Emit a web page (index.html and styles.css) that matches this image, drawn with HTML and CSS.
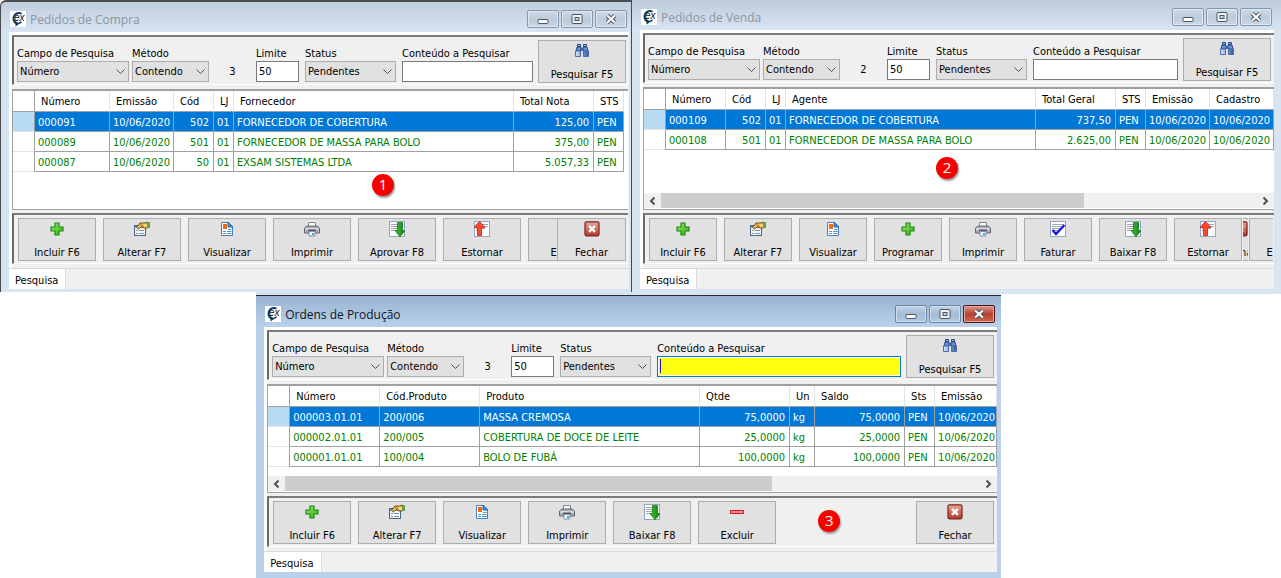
FILE: index.html
```html
<!DOCTYPE html>
<html lang="pt-BR">
<head>
<meta charset="utf-8">
<title>Pedidos e Ordens de Produção</title>
<link rel="stylesheet" href="styles.css">
</head>
<body>
<svg class="sprite" aria-hidden="true">
  <defs>
    <linearGradient id="g-green" x1="0" y1="0" x2="1" y2="1"><stop offset="0" stop-color="#9be86a"/><stop offset="1" stop-color="#2fae18"/></linearGradient>
    <linearGradient id="g-arrow" x1="0" y1="0" x2="1" y2="0"><stop offset="0" stop-color="#4cc63a"/><stop offset="1" stop-color="#0a7a0a"/></linearGradient>
    <linearGradient id="g-red" x1="0" y1="0" x2="0" y2="1"><stop offset="0" stop-color="#e9a898"/><stop offset="1" stop-color="#b0382a"/></linearGradient>
    <linearGradient id="g-blue" x1="0" y1="0" x2="1" y2="0"><stop offset="0" stop-color="#dbe8f8"/><stop offset="1" stop-color="#2c5ba6"/></linearGradient>
    <symbol id="i-app" viewBox="0 0 16 16">
      <rect width="16" height="16" fill="#fff"/>
      <path d="M11.500 2.600A5.500 5.500 0 1 0 6.500 12.600" fill="none" stroke="#123a5e" stroke-width="2"/>
      <path d="M5.500 10v5.500L9.500 12.800z" fill="#123a5e"/>
      <path d="M8.500 12.600a5.500 5.500 0 0 0 3-2" fill="none" stroke="#123a5e" stroke-width="1.500"/>
      <text x="4" y="9.500" class="logo-text">ex</text>
    </symbol>
    <symbol id="i-find" viewBox="0 0 16 16">
      <path d="M3.500 1.500h3v2h-3zM9.500 1.500h3v2h-3z" fill="#8fb0dc" stroke="#2a4a86"/>
      <path d="M3 4h4v4H2zM9 4h4l1 4H9z" fill="#6b92cc" stroke="#2a4a86"/>
      <path d="M6.500 5h3v3h-3z" fill="#3f68ac"/>
      <path d="M1.500 8h5v5.500h-5zM9.500 8h5v5.500h-5z" fill="url(#g-blue)" stroke="#4a6da8"/>
    </symbol>
    <symbol id="i-plus" viewBox="0 0 16 16"><path d="M6 2h4v4h4v4h-4v4H6v-4H2V6h4z" fill="url(#g-green)" stroke="#1c8a12" stroke-width="1.200"/></symbol>
    <symbol id="i-minus" viewBox="0 0 16 16"><rect x="1.500" y="6.500" width="13" height="3" fill="#ff8585" stroke="#e0152b"/></symbol>
    <symbol id="i-edit" viewBox="0 0 16 16">
      <rect x=".5" y="4.500" width="11" height="10" fill="#f4f7fc" stroke="#4a6284"/>
      <path d="M1 5h10v2H1z" fill="#7d99bd"/>
      <path d="M2 9.500h2M5 9.500h5M2 12.500h2M5 12.500h5" stroke="#8193ad"/>
      <path d="M2.500 6.500 6 2h5l2-1v6h-3L7.500 5.500 4.500 8z" fill="#f0c060" stroke="#6f4c16"/>
      <path d="M6 3l4 3M8 2.500l3 2.500" stroke="#a57424"/>
      <path d="M12.500 1H16v6h-3.500z" fill="#67a04b"/><path d="M9 3h4v3h-3z" fill="#ffd86b"/>
    </symbol>
    <symbol id="i-view" viewBox="0 0 16 16">
      <path d="M2.500 1.500h7l4 4v9h-11z" fill="#fff" stroke="#4f7fb8"/>
      <path d="M9 1v5h5z" fill="#3c94e4" stroke="#2065b0"/>
      <path d="M4 3h4v5H4z" fill="#f26a10"/>
      <path d="M9 8.500h3.500M4 10.500h3M8 10.500h4.500M4 12.500h3M8 12.500h4.500" stroke="#4c96dc"/>
    </symbol>
    <symbol id="i-print" viewBox="0 0 16 16">
      <path d="M4.500 1.500h7v4h-7z" fill="#fff" stroke="#7f8999"/>
      <path d="M3 5h10l2.500 2v5H.5V7z" fill="#a9adb6" stroke="#62666f"/>
      <path d="M1 7h14v2H1z" fill="#d3d6dc"/><path d="M4 8.500h8v2H4z" fill="#52565f"/>
      <path d="M5 10.500h6v4.500H5z" fill="#f5faff" stroke="#8794a8"/><path d="M8 12h2v2H8z" fill="#39a2f4"/>
    </symbol>
    <symbol id="i-sheet" viewBox="0 0 16 16">
      <rect x=".5" y=".5" width="15" height="15" fill="#fff" stroke="#93a5c0"/>
      <path d="M2 3.500h12M2 5.500h12M2 7.500h9M2 9.500h6" stroke="#a0a5ad"/>
    </symbol>
    <symbol id="i-down" viewBox="0 0 16 16">
      <use href="#i-sheet"/><path d="M8.500 1.500h5v8h2.500L11 15.800 6 9.500h2.500z" fill="url(#g-arrow)" stroke="#0b7d12" stroke-width=".8"/>
    </symbol>
    <symbol id="i-up" viewBox="0 0 16 16">
      <use href="#i-sheet"/><path d="M3.500 14.500h4v-8H11L5.500.4 0 6.500h3.500z" fill="#ff4a2c" stroke="#cf1d10" stroke-width=".8"/>
    </symbol>
    <symbol id="i-check" viewBox="0 0 16 16">
      <use href="#i-sheet"/><path d="M2.500 9 6 13 14.500 4" fill="none" stroke="#1616ee" stroke-width="2.400"/>
    </symbol>
    <symbol id="i-close" viewBox="0 0 16 16">
      <rect x="1" y=".800" width="14" height="14" rx="1.500" fill="url(#g-red)" stroke="#7c221c" stroke-width="1.200"/>
      <path d="M5 4.800l6 6M11 4.800l-6 6" stroke="#fff" stroke-width="2.400"/>
    </symbol>
    <symbol id="i-chev" viewBox="0 0 9 5"><path d="M.5.5l4 4 4-4" fill="none" stroke="#505050"/></symbol>
    <symbol id="i-left" viewBox="0 0 7 8"><path d="M5.500.5 2 4l3.500 3.500" fill="none" stroke="#505050" stroke-width="2"/></symbol>
    <symbol id="i-right" viewBox="0 0 7 8"><path d="M1.500.5 5 4 1.500 7.500" fill="none" stroke="#505050" stroke-width="2"/></symbol>
    <symbol id="c-min" viewBox="0 0 12 12"><rect x="1" y="6.500" width="10" height="4" rx="1" fill="#fff" stroke="#4b5563"/></symbol>
    <symbol id="c-max" viewBox="0 0 12 12"><rect x="1" y="1.500" width="10" height="9" rx="1" fill="#f0f4f8" stroke="#4b5563"/><rect x="4" y="4.500" width="4" height="3" fill="#c5d3e2" stroke="#4b5563"/></symbol>
    <symbol id="c-x" viewBox="0 0 12 12"><path d="M2.200 2.500l7.600 7M9.800 2.500l-7.600 7" stroke="#4b5563" stroke-width="4.400"/><path d="M2.200 2.500l7.600 7M9.800 2.500l-7.600 7" stroke="#fff" stroke-width="2.200"/></symbol>
  </defs>
</svg>

<main class="desk">
  <section class="window win-buy">
    <header class="titlebar">
      <svg class="icon"><use href="#i-app"/></svg><h2>Pedidos de Compra</h2>
      <button class="cap" aria-label="Minimizar"><svg><use href="#c-min"/></svg></button>
      <button class="cap" aria-label="Maximizar"><svg><use href="#c-max"/></svg></button>
      <button class="cap" aria-label="Fechar janela"><svg><use href="#c-x"/></svg></button>
    </header>
    <div class="client">
      <form class="panel search">
        <div class="field w-campo"><label for="a1">Campo de Pesquisa</label><span class="combo"><select id="a1"><option>Número</option></select><svg><use href="#i-chev"/></svg></span></div>
        <div class="field w-metodo"><label for="a2">Método</label><span class="combo"><select id="a2"><option>Contendo</option></select><svg><use href="#i-chev"/></svg></span></div>
        <output class="count">3</output>
        <div class="field w-limite"><label for="a3">Limite</label><input id="a3" type="text" value="50"></div>
        <div class="field w-status"><label for="a4">Status</label><span class="combo"><select id="a4"><option>Pendentes</option></select><svg><use href="#i-chev"/></svg></span></div>
        <div class="field grow"><label for="a5">Conteúdo a Pesquisar</label><input id="a5" type="text"></div>
        <button type="button" class="tool find"><svg class="icon"><use href="#i-find"/></svg>Pesquisar F5</button>
      </form>
      <div class="gridbox">
        <table>
          <thead><tr><th class="c-ind"></th><th class="c75">Número</th><th class="c64">Emissão</th><th class="c40">Cód</th><th class="c20">LJ</th><th>Fornecedor</th><th class="c80">Total Nota</th><th class="c30">STS</th></tr></thead>
          <tbody>
            <tr class="sel"><td></td><td>000091</td><td>10/06/2020</td><td class="r">502</td><td>01</td><td>FORNECEDOR DE COBERTURA</td><td class="r">125,00</td><td>PEN</td></tr>
            <tr><td></td><td>000089</td><td>10/06/2020</td><td class="r">501</td><td>01</td><td>FORNECEDOR DE MASSA PARA BOLO</td><td class="r">375,00</td><td>PEN</td></tr>
            <tr><td></td><td>000087</td><td>10/06/2020</td><td class="r">50</td><td>01</td><td>EXSAM SISTEMAS LTDA</td><td class="r">5.057,33</td><td>PEN</td></tr>
          </tbody>
        </table>
      </div>
      <div class="panel tools">
        <div class="strip">
          <button class="tool"><svg class="icon"><use href="#i-plus"/></svg>Incluir F6</button>
          <button class="tool"><svg class="icon"><use href="#i-edit"/></svg>Alterar F7</button>
          <button class="tool"><svg class="icon"><use href="#i-view"/></svg>Visualizar</button>
          <button class="tool"><svg class="icon"><use href="#i-print"/></svg>Imprimir</button>
          <button class="tool"><svg class="icon"><use href="#i-down"/></svg>Aprovar F8</button>
          <button class="tool"><svg class="icon"><use href="#i-up"/></svg>Estornar</button>
          <button class="tool"><svg class="icon"><use href="#i-minus"/></svg>Excluir</button>
        </div>
        <button class="tool narrow"><svg class="icon"><use href="#i-close"/></svg>Fechar</button>
      </div>
    </div>
    <nav class="tabs"><button class="tab">Pesquisa</button></nav>
    <span class="badge">1</span>
  </section>

  <section class="window win-sell">
    <header class="titlebar">
      <svg class="icon"><use href="#i-app"/></svg><h2>Pedidos de Venda</h2>
      <button class="cap" aria-label="Minimizar"><svg><use href="#c-min"/></svg></button>
      <button class="cap" aria-label="Maximizar"><svg><use href="#c-max"/></svg></button>
      <button class="cap" aria-label="Fechar janela"><svg><use href="#c-x"/></svg></button>
    </header>
    <div class="client">
      <form class="panel search">
        <div class="field w-campo"><label for="b1">Campo de Pesquisa</label><span class="combo"><select id="b1"><option>Número</option></select><svg><use href="#i-chev"/></svg></span></div>
        <div class="field w-metodo"><label for="b2">Método</label><span class="combo"><select id="b2"><option>Contendo</option></select><svg><use href="#i-chev"/></svg></span></div>
        <output class="count">2</output>
        <div class="field w-limite"><label for="b3">Limite</label><input id="b3" type="text" value="50"></div>
        <div class="field w-status"><label for="b4">Status</label><span class="combo"><select id="b4"><option>Pendentes</option></select><svg><use href="#i-chev"/></svg></span></div>
        <div class="field grow"><label for="b5">Conteúdo a Pesquisar</label><input id="b5" type="text"></div>
        <button type="button" class="tool find"><svg class="icon"><use href="#i-find"/></svg>Pesquisar F5</button>
      </form>
      <div class="gridbox">
        <table>
          <thead><tr><th class="c-ind"></th><th class="c60">Número</th><th class="c40">Cód</th><th class="c20">LJ</th><th>Agente</th><th class="c80">Total Geral</th><th class="c30">STS</th><th class="c64">Emissão</th><th class="c64">Cadastro</th></tr></thead>
          <tbody>
            <tr class="sel"><td></td><td>000109</td><td class="r">502</td><td>01</td><td>FORNECEDOR DE COBERTURA</td><td class="r">737,50</td><td>PEN</td><td>10/06/2020</td><td>10/06/2020</td></tr>
            <tr><td></td><td>000108</td><td class="r">501</td><td>01</td><td>FORNECEDOR DE MASSA PARA BOLO</td><td class="r">2.625,00</td><td>PEN</td><td>10/06/2020</td><td>10/06/2020</td></tr>
          </tbody>
        </table>
        <div class="scroll"><button aria-label="Rolar à esquerda"><svg><use href="#i-left"/></svg></button><span class="track"><span class="thumb" style="width:71%"></span></span><button aria-label="Rolar à direita"><svg><use href="#i-right"/></svg></button></div>
      </div>
      <div class="panel tools">
        <div class="strip">
          <button class="tool"><svg class="icon"><use href="#i-plus"/></svg>Incluir F6</button>
          <button class="tool"><svg class="icon"><use href="#i-edit"/></svg>Alterar F7</button>
          <button class="tool"><svg class="icon"><use href="#i-view"/></svg>Visualizar</button>
          <button class="tool"><svg class="icon"><use href="#i-plus"/></svg>Programar</button>
          <button class="tool"><svg class="icon"><use href="#i-print"/></svg>Imprimir</button>
          <button class="tool"><svg class="icon"><use href="#i-check"/></svg>Faturar</button>
          <button class="tool"><svg class="icon"><use href="#i-down"/></svg>Baixar F8</button>
          <button class="tool"><svg class="icon"><use href="#i-up"/></svg>Estornar</button>
        </div>
        <div class="sliver"><button class="tool"><svg class="icon"><use href="#i-close"/></svg>Fechar</button></div>
        <div class="strip rest"><button class="tool"><svg class="icon"><use href="#i-minus"/></svg>Excluir</button></div>
      </div>
    </div>
    <nav class="tabs"><button class="tab">Pesquisa</button></nav>
    <span class="badge">2</span>
  </section>

  <section class="window win-prod">
    <header class="titlebar">
      <svg class="icon"><use href="#i-app"/></svg><h2>Ordens de Produção</h2>
      <button class="cap" aria-label="Minimizar"><svg><use href="#c-min"/></svg></button>
      <button class="cap" aria-label="Maximizar"><svg><use href="#c-max"/></svg></button>
      <button class="cap cap-red" aria-label="Fechar janela"><svg><use href="#c-x"/></svg></button>
    </header>
    <div class="client">
      <form class="panel search">
        <div class="field w-campo"><label for="p1">Campo de Pesquisa</label><span class="combo"><select id="p1"><option>Número</option></select><svg><use href="#i-chev"/></svg></span></div>
        <div class="field w-metodo"><label for="p2">Método</label><span class="combo"><select id="p2"><option>Contendo</option></select><svg><use href="#i-chev"/></svg></span></div>
        <output class="count">3</output>
        <div class="field w-limite"><label for="p3">Limite</label><input id="p3" type="text" value="50"></div>
        <div class="field w-status"><label for="p4">Status</label><span class="combo"><select id="p4"><option>Pendentes</option></select><svg><use href="#i-chev"/></svg></span></div>
        <div class="field grow"><label for="p5">Conteúdo a Pesquisar</label><input id="p5" class="active" type="text"></div>
        <button type="button" class="tool find"><svg class="icon"><use href="#i-find"/></svg>Pesquisar F5</button>
      </form>
      <div class="gridbox">
        <table>
          <thead><tr><th class="c-ind"></th><th class="c90">Número</th><th class="c100">Cód.Produto</th><th>Produto</th><th class="c90">Qtde</th><th class="c25">Un</th><th class="c90">Saldo</th><th class="c30">Sts</th><th class="c62">Emissão</th></tr></thead>
          <tbody>
            <tr class="sel"><td></td><td>000003.01.01</td><td>200/006</td><td>MASSA CREMOSA</td><td class="r">75,0000</td><td>kg</td><td class="r">75,0000</td><td>PEN</td><td>10/06/2020</td></tr>
            <tr><td></td><td>000002.01.01</td><td>200/005</td><td>COBERTURA DE DOCE DE LEITE</td><td class="r">25,0000</td><td>kg</td><td class="r">25,0000</td><td>PEN</td><td>10/06/2020</td></tr>
            <tr><td></td><td>000001.01.01</td><td>100/004</td><td>BOLO DE FUBÁ</td><td class="r">100,0000</td><td>kg</td><td class="r">100,0000</td><td>PEN</td><td>10/06/2020</td></tr>
          </tbody>
        </table>
        <div class="scroll"><button aria-label="Rolar à esquerda"><svg><use href="#i-left"/></svg></button><span class="track"><span class="thumb" style="width:70%"></span></span><button aria-label="Rolar à direita"><svg><use href="#i-right"/></svg></button></div>
      </div>
      <div class="panel tools">
        <div class="strip">
          <button class="tool"><svg class="icon"><use href="#i-plus"/></svg>Incluir F6</button>
          <button class="tool"><svg class="icon"><use href="#i-edit"/></svg>Alterar F7</button>
          <button class="tool"><svg class="icon"><use href="#i-view"/></svg>Visualizar</button>
          <button class="tool"><svg class="icon"><use href="#i-print"/></svg>Imprimir</button>
          <button class="tool"><svg class="icon"><use href="#i-down"/></svg>Baixar F8</button>
          <button class="tool"><svg class="icon"><use href="#i-minus"/></svg>Excluir</button>
        </div>
        <button class="tool"><svg class="icon"><use href="#i-close"/></svg>Fechar</button>
      </div>
    </div>
    <nav class="tabs"><button class="tab">Pesquisa</button></nav>
    <span class="badge">3</span>
  </section>
</main>
</body>
</html>
```
FILE: styles.css
```css
* { box-sizing: border-box; }

body {
  margin: 0;
  background: #fff;
  color: #000;
  font: 11px/14px "DejaVu Sans Condensed", "DejaVu Sans", sans-serif;
}

button, input, select {
  margin: 0;
  padding: 0;
  color: inherit;
  font: inherit;
  border-radius: 0;
}

.sprite { position: absolute; width: 0; height: 0; }
.logo-text { font: italic 400 10px "Liberation Sans", sans-serif; fill: #111; }
.icon { width: 16px; height: 16px; flex: none; }

.desk {
  display: grid;
  grid-template-columns: 632fr 649fr;
  align-items: start;
}

/* Windows */
.window {
  position: relative;
  min-width: 0;
}
.win-buy {
  padding: 0 2px 3px 8px;
  border: solid #4a4a4f;
  border-width: 2px 1px 0 1px;
  border-top-left-radius: 6px;
  background: linear-gradient(#bfcedd, #d7e4f2 30px);
}
.win-sell {
  padding: 0 7px 5px 8px;
  background: linear-gradient(#bccbdb, #d7e4f2 30px);
}
.win-prod {
  grid-column: 1 / -1;
  margin: 1px 21.85% 0 20%;
  padding: 0 4px 6px 8px;
  border-top: 1px solid #2b2b2b;
  box-shadow: 0 -3px #d7e4f2;
  background: linear-gradient(#99b4d1, #b9d1ea 31px);
}

.titlebar {
  display: flex;
  align-items: center;
  gap: 2px;
  height: 30px;
  padding: 4px 2px 0 1px;
}
.titlebar h2 {
  flex: 1;
  margin: 2px 0 0 2px;
  color: #8d959e;
  font: 400 12px/16px "Open Sans", "Noto Sans", sans-serif;
}
.win-prod .titlebar { height: 31px; }
.win-prod .titlebar h2 { color: #10151c; }

.cap {
  display: grid;
  place-items: center;
  width: 32px;
  height: 18px;
  border: 1px solid #8797ab;
  border-radius: 2px;
  background: linear-gradient(#cfdbe8, #bccbdb 50%, #c9d7e6);
  box-shadow: inset 0 0 0 1px #dfe9f3;
}
.cap svg { width: 12px; height: 12px; }
.win-prod .cap { border-color: #6f86a3; background: linear-gradient(#c4d5e8, #a3bad5 50%, #b4cae2); box-shadow: inset 0 0 0 1px #d0deed; }
.win-prod .cap-red {
  border-color: #4c1418;
  background: linear-gradient(#dc9a90, #b8402f 50%, #cf6a50);
  box-shadow: inset 0 0 0 1px #e3ab9f;
}

/* Client area */
.client {
  display: flex;
  flex-direction: column;
  padding: 3px 1px 4px 3px;
  background: linear-gradient(#fff, #fff) 0 0 / 100% 3px no-repeat, linear-gradient(#fff, #fff) 0 0 / 3px 100% no-repeat, #f0f0f0;
}
.win-sell .client, .win-prod .client { padding-right: 0; }

.panel {
  display: flex;
  border: solid #696969;
  border-width: 2px 0 1px 2px;
  border-top-color: #7c7c7c;
  border-bottom-color: #fff;
  background: #f0f0f0;
}

.search {
  align-items: flex-end;
  padding: 3px 2px 1px 3px;
}
.win-sell .search, .win-prod .search { padding-right: 3px; }
.field { display: flex; flex: none; flex-direction: column; padding-bottom: 1px; }
.field label { white-space: nowrap; }
.w-campo { width: 112px; margin-right: 3px; }
.w-metodo { width: 77px; }
.w-limite { width: 43px; margin-right: 6px; }
.w-status { width: 91px; margin-right: 6px; }
.grow { flex: 1; min-width: 0; margin-right: 5px; }
.count { width: 47px; padding-bottom: 4px; text-align: center; }

.combo { display: grid; align-items: center; }
.combo select, .combo svg { grid-area: 1 / 1; }
.combo svg { width: 9px; height: 5px; margin-right: 4px; justify-self: end; pointer-events: none; }
.combo select {
  width: 100%;
  height: 21px;
  padding: 1px 2px 0;
  appearance: none;
  border: 1px solid #adadad;
  background: #e1e1e1;
}
.field input {
  width: 100%;
  height: 21px;
  padding: 0 2px 1px;
  border: 1px solid #7a7a7a;
  background: #fff;
}
.field .active {
  border-color: #0078d7;
  outline: 0;
  background: linear-gradient(#1a1aa0, #1a1aa0) 2px 2px / 1px 14px no-repeat, #ff1;
  box-shadow: inset 0 0 0 1px #fff;
}

.tool {
  display: flex;
  flex: none;
  flex-direction: column;
  align-items: center;
  justify-content: space-between;
  width: 78px;
  height: 43px;
  padding: 2px 0 0;
  border: 1px solid #adadad;
  background: #e1e1e1;
  white-space: nowrap;
}
.find { width: 88px; }
.narrow { width: 69px; }
.win-sell .tools .tool { width: 68px; }

/* Data grid */
.gridbox {
  display: flex;
  flex-direction: column;
  justify-content: space-between;
  min-height: 121px;
  margin: 4px 0 3px;
  border: solid #a0a0a0;
  border-width: 2px 0 1px 1px;
  background: #fff;
}
.win-sell .gridbox { min-height: 123px; }
.win-prod .gridbox { min-height: 109px; }

table {
  width: 100%;
  table-layout: fixed;
  border-spacing: 0;
}
.win-buy table { width: auto; margin-right: 4px; }
th, td {
  height: 20px;
  padding: 2px 0 0 3px;
  border: solid #a0a0a0;
  border-width: 0 1px 1px 0;
  overflow: hidden;
  text-align: left;
  white-space: nowrap;
}
th {
  height: 21px;
  padding-left: 6px;
  border-right-color: #e3e3e3;
  font-weight: 400;
}
td { color: #008000; }
td.r { padding-right: 4px; text-align: right; }
td:first-child { border-bottom-color: #e3e3e3; }
th:first-child { border-right-color: #a0a0a0; }
.sel td { background: #0078d7; color: #fff; }
.sel td:first-child { background: #b9dcf4; }

.c-ind { width: 22px; }
.c20 { width: 20px; }
.c25 { width: 25px; }
.c30 { width: 30px; }
.c40 { width: 40px; }
.c60 { width: 60px; }
.c62 { width: 62px; }
.c64 { width: 64px; }
.c75 { width: 75px; }
.c80 { width: 80px; }
.c90 { width: 90px; }
.c100 { width: 100px; }

.scroll { display: flex; height: 15px; margin-bottom: 1px; background: #f0f0f0; }
.scroll button { display: grid; place-items: center; width: 17px; border: 0; background: #f0f0f0; }
.scroll svg { width: 7px; height: 8px; }
.track { flex: 1; }
.thumb { display: block; height: 100%; background: #cdcdcd; }

/* Toolbar */
.tools { padding: 3px 2px 2px 4px; }
.strip { display: flex; flex: 1; gap: 7px; min-width: 0; overflow: hidden; }
.win-sell .tools { padding-right: 1px; }
.win-prod .tools { padding-right: 3px; }
.win-sell .strip { flex: none; }
.win-sell .rest { flex: 1; }
.sliver { width: 5px; margin: 0 1px; overflow: hidden; }
.sliver .tool { margin-left: -37px; }

.tabs { display: flex; height: 21px; border-top: 1px solid #d9d9d9; background: #f0f0f0; }
.tab { padding: 4px 7px 0 6px; border: 0; border-right: 1px solid #d9d9d9; background: #fff; }

.badge {
  position: absolute;
  width: 22px;
  height: 22px;
  border-radius: 50%;
  background: #f80000;
  box-shadow: 1px 2px 2px #9a9a9a;
  color: #fff;
  font: 15px/21px "Open Sans", sans-serif;
  text-align: center;
}
.win-buy .badge { left: 371px; top: 172px; }
.win-sell .badge { left: 304px; top: 157px; }
.win-prod .badge { left: 562px; top: 214px; }
```
